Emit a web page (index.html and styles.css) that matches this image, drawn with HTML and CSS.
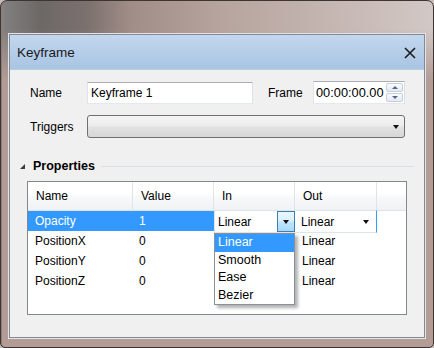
FILE: index.html
```html
<!doctype html>
<html>
<head>
<meta charset="UTF-8">
<link rel="stylesheet" href="styles.css">
</head>
<body>
<div class="window">
  <div class="dialog">
    <div class="titlebar">
      <span class="title">Keyframe</span>
      <svg class="close" width="12" height="12" viewBox="0 0 12 12">
        <path d="M1 1 L11 11 M11 1 L1 11" stroke="#1c1c1c" stroke-width="1.6" fill="none"/>
      </svg>
    </div>
    <div class="content">
      <div class="field-row">
        <span class="label">Name</span>
        <div class="textbox name-box">Keyframe 1</div>
        <span class="label frame-label">Frame</span>
        <div class="spinbox">
          <div class="time-box">00:00:00.00</div>
          <div class="spin">
            <div class="spin-btn"><span class="tri-up"></span></div>
            <div class="spin-btn"><span class="tri-down"></span></div>
          </div>
        </div>
      </div>
      <div class="field-row triggers-row">
        <span class="label">Triggers</span>
        <div class="combo"><span class="arrow"></span></div>
      </div>
      <div class="section-head">
        <span class="expander"></span>
        <span class="section-title">Properties</span>
        <span class="section-line"></span>
      </div>
      <div class="grid">
        <div class="grid-head">
          <div class="col c-name">Name</div>
          <div class="col c-value">Value</div>
          <div class="col c-in">In</div>
          <div class="col c-out">Out</div>
          <div class="col c-rest"></div>
        </div>
        <div class="grid-row selected">
          <div class="cell c-name">Opacity</div>
          <div class="cell c-value">1</div>
          <div class="cell c-in edit">
            <div class="cell-combo in-combo">
              <span class="cc-text">Linear</span>
              <span class="cc-btn"><span class="arrow"></span></span>
            </div>
            <div class="popup">
              <div class="popup-item hot">Linear</div>
              <div class="popup-item">Smooth</div>
              <div class="popup-item">Ease</div>
              <div class="popup-item">Bezier</div>
            </div>
          </div>
          <div class="cell c-out edit">
            <div class="cell-combo out-combo">
              <span class="cc-text">Linear</span>
              <span class="arrow"></span>
            </div>
          </div>
        </div>
        <div class="grid-row">
          <div class="cell c-name">PositionX</div>
          <div class="cell c-value">0</div>
          <div class="cell c-in"></div>
          <div class="cell c-out">Linear</div>
        </div>
        <div class="grid-row">
          <div class="cell c-name">PositionY</div>
          <div class="cell c-value">0</div>
          <div class="cell c-in"></div>
          <div class="cell c-out">Linear</div>
        </div>
        <div class="grid-row">
          <div class="cell c-name">PositionZ</div>
          <div class="cell c-value">0</div>
          <div class="cell c-in"></div>
          <div class="cell c-out">Linear</div>
        </div>
      </div>
    </div>
  </div>
</div>
</body>
</html>
```

FILE: styles.css
```css
body{
  margin: 0;
  padding: 0;
  font-family: "Liberation Sans", Arial, sans-serif;
  font-size: 12px;
  color: #000;
  background: #c8bab5;
}

.window{
  width: 434px;
  height: 348px;
  box-sizing: border-box;
  padding: 33px 8px 8px 8px;
  border: 1px solid #3e3533;
  border-radius: 7px 7px 5px 5px;
  background:
    linear-gradient(to bottom, rgba(178,156,150,0) 0, rgba(178,156,150,0) 28px, #b39c96 80px),
    linear-gradient(to right, #838281 0, #6c6866 9%, #7b716e 20%, #a18d87 30%, #b6a39d 50%, #c4b5b0 75%, #d2c8c5 100%);
  box-shadow: inset 1px 0 0 #8d7e7a;
}

.dialog{
  height: 304px;
  box-sizing: border-box;
  border: 1px solid #7d8a99;
  background: #f0f0f0;
  box-shadow: 0 0 0 1px #e9e2e0;
}

.titlebar{
  height: 34px;
  display: flex;
  align-items: center;
  justify-content: space-between;
  padding: 0 8px 0 7px;
  background: linear-gradient(to bottom, #c3d7ed, #a8c5e3);
  border-bottom: 1px solid #b9cde2;
}

.title{
  font-size: 13.5px;
  color: #1a1a1a;
  padding-top: 1px;
}

.close{
  margin-top: 2px;
}

.content{
  padding: 11px 19px 0 20px;
}

.field-row{
  display: flex;
  align-items: center;
  height: 23px;
}

.triggers-row{
  margin-top: 11px;
}

.label{
  width: 57px;
  flex: none;
}

.frame-label{
  width: 45px;
  margin-left: 15px;
}

.textbox{
  box-sizing: border-box;
  height: 22px;
  border: 1px solid #abadb3;
  border-color: #abadb3 #dbdfe6 #e3e9ef #e2e3ea;
  background: #fff;
  padding: 3px 3px;
  line-height: 14px;
}

.name-box{
  width: 166px;
}

.spinbox{
  width: 92px;
  height: 23px;
  box-sizing: border-box;
  display: flex;
  border: 1px solid #abadb3;
  border-color: #abadb3 #dbdfe6 #e3e9ef #e2e3ea;
  background: #fff;
}

.time-box{
  flex: 1;
  padding: 3px 0 0 2px;
  line-height: 15px;
  font-size: 12.8px;
}

.spin{
  width: 17px;
  display: flex;
  flex-direction: column;
  padding: 1px 1px 1px 0;
  gap: 1px;
}

.spin-btn{
  flex: 1;
  display: flex;
  align-items: center;
  justify-content: center;
  border: 1px solid #c5cedb;
  border-radius: 2px;
  background: linear-gradient(to bottom, #fbfbfd, #e4e8f0);
}

.tri-up{
  border-style: solid;
  border-width: 0 3px 3px 3px;
  border-color: transparent transparent #52688e transparent;
}

.tri-down{
  border-style: solid;
  border-width: 3px 3px 0 3px;
  border-color: #52688e transparent transparent transparent;
}

.combo{
  width: 318px;
  height: 23px;
  box-sizing: border-box;
  border: 1px solid #707070;
  border-radius: 3px;
  background: linear-gradient(to bottom, #f4f4f4 0%, #ececec 48%, #e2e2e2 52%, #d6d6d6 100%);
  display: flex;
  align-items: center;
  justify-content: flex-end;
  padding-right: 5px;
}

.arrow{
  display: inline-block;
  border-style: solid;
  border-width: 4px 3.5px 0 3.5px;
  border-color: #111 transparent transparent transparent;
}

.section-head{
  margin-top: 20px;
  height: 16px;
  display: flex;
  align-items: center;
}

.expander{
  margin-left: -10px;
  margin-right: 8px;
  margin-top: 1px;
  border-style: solid;
  border-width: 0 0 5px 5px;
  border-color: transparent transparent #3a3a3a transparent;
}

.section-title{
  font-weight: bold;
  font-size: 12.5px;
}

.section-line{
  flex: 1;
  height: 1px;
  background: #d5dfe5;
  margin-left: 6px;
  margin-right: -9px;
}

.grid{
  margin-top: 7px;
  margin-left: -3px;
  width: 380px;
  height: 134px;
  box-sizing: border-box;
  border: 1px solid #828790;
  background: #fff;
}

.grid-head{
  display: flex;
  height: 29px;
  box-sizing: border-box;
  background: linear-gradient(to bottom, #ffffff 0%, #ffffff 40%, #f6f7f8 60%, #f1f2f4 100%);
  border-bottom: 1px solid #e0e2e6;
}

.col{
  box-sizing: border-box;
  border-right: 1px solid #e2e3e6;
  padding: 7px 0 0 8px;
}

.c-name{ width: 105px; }
.c-value{ width: 81px; }
.c-in{ width: 81px; }
.c-out{ width: 82px; }
.c-rest{ flex: 1; border-right: none; }

.grid-row{
  display: flex;
  height: 20px;
}

.cell{
  box-sizing: border-box;
  padding: 3px 0 0 7px;
  line-height: 14px;
}

.cell.c-value{
  padding-left: 6px;
}

.selected .c-name,
.selected .c-value{
  background: #3399ff;
  color: #fff;
}

.cell.edit{
  padding: 0;
  position: relative;
}

.cell-combo{
  box-sizing: border-box;
  height: 23px;
  margin-top: -1px;
  display: flex;
  align-items: center;
  background: #fff;
  border: 1px solid #dfe3ea;
}

.cc-text{
  flex: 1;
}

.in-combo{
  padding-left: 3px;
}

.cc-btn{
  width: 18px;
  height: 21px;
  box-sizing: border-box;
  border: 1px solid #3c7fb1;
  background: linear-gradient(to bottom, #eaf6fd 0%, #d9f0fc 48%, #bee6fd 52%, #a7d9f5 100%);
  display: flex;
  align-items: center;
  justify-content: center;
  margin-right: -1px;
}

.out-combo{
  padding: 0 7px 0 6px;
  border-right: 1px solid #3399ff;
  border-left: none;
}

.popup{
  position: absolute;
  left: 0;
  top: 22px;
  width: 81px;
  box-sizing: border-box;
  border: 1px solid #8a8f98;
  background: #fff;
  box-shadow: 3px 3px 3px rgba(0,0,0,0.3);
  z-index: 2;
}

.popup-item{
  height: 17.5px;
  line-height: 17.5px;
  padding-left: 3px;
  font-size: 12.5px;
}

.popup-item.hot{
  background: #3399ff;
  color: #fff;
}
```
